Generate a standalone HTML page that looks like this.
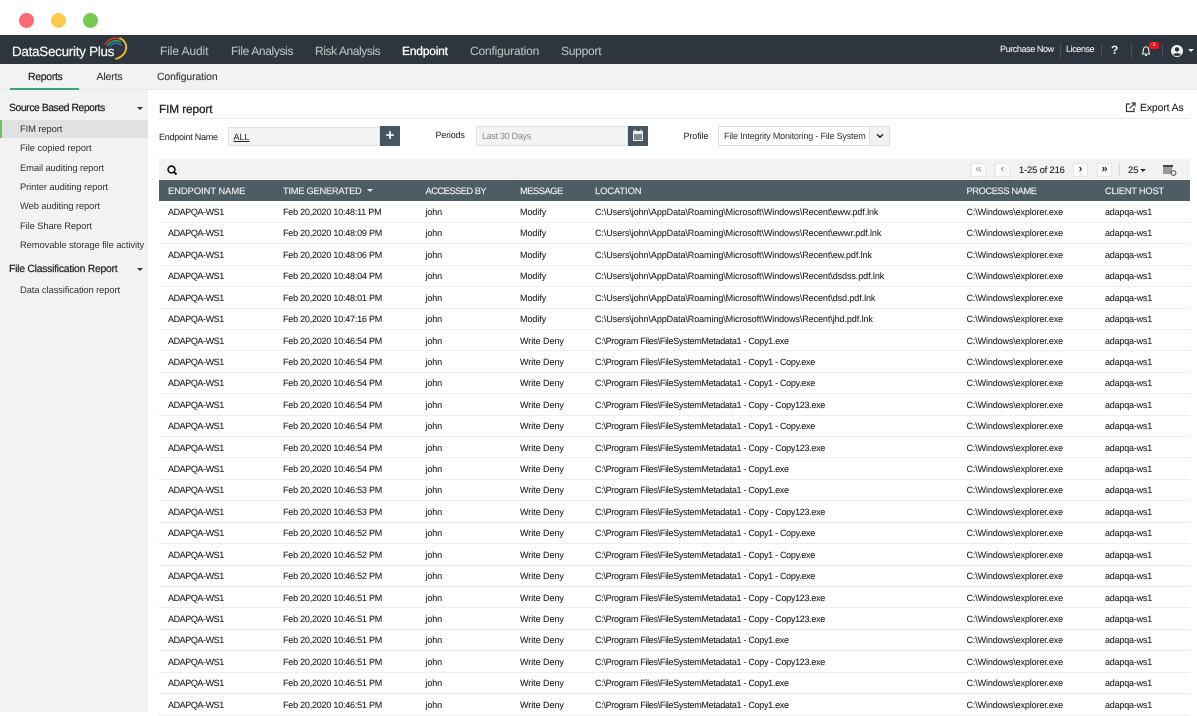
<!DOCTYPE html>
<html><head><meta charset="utf-8"><style>
*{box-sizing:border-box}
html,body{margin:0;padding:0;background:#fff}
body{width:1197px;height:712px;position:relative;overflow:hidden;font-family:"Liberation Sans",sans-serif;text-rendering:geometricPrecision;color:#222}
.a{position:absolute;white-space:nowrap}
.dot{position:absolute;width:15px;height:15px;border-radius:50%;top:13px}
.nav{position:absolute;top:44px;font-size:12px;line-height:14px;color:#b9bdc1;letter-spacing:-.1px;white-space:nowrap;-webkit-text-stroke:.1px #b9bdc1}
.sb{position:absolute;left:20px;font-size:9.4px;line-height:14px;color:#333;letter-spacing:-.1px;white-space:nowrap;margin-top:.4px}
.sh{position:absolute;left:9px;font-size:10.4px;line-height:14px;color:#222;white-space:nowrap;-webkit-text-stroke:.2px #222}
.caret{position:absolute;width:0;height:0;border-left:3px solid transparent;border-right:3px solid transparent;border-top:3.5px solid #333}
.sep{position:absolute;width:1px;background:#48505a;top:44px;height:14px}
.lb{position:absolute;font-size:9px;line-height:14px;color:#222;letter-spacing:-.1px;white-space:nowrap}
.pg{position:absolute;top:163px;height:14px;width:15px;background:#fff;border:1px solid #e6e6e6;font-size:11px;line-height:11px;text-align:center;color:#222}
#rows{position:absolute;left:159px;top:201.4px;width:1031px}
.r{position:relative;height:21.43px;border-bottom:1px solid #efefef;font-size:9px;line-height:21px;color:#222;letter-spacing:-.13px;-webkit-text-stroke:.08px #222}
.r span{position:absolute;top:.6px;white-space:nowrap}
.r span:nth-child(1){left:9px;letter-spacing:-.42px}
.r span:nth-child(2){left:124px;letter-spacing:-.22px}
.r span:nth-child(3){left:266.5px}
.r span:nth-child(4){left:361px;letter-spacing:-.05px}
.r span:nth-child(5){left:436px;letter-spacing:-.08px}
.r:nth-child(n+7) span:nth-child(5){letter-spacing:-.3px}
.r span:nth-child(6){left:807.5px}
.r span:nth-child(7){left:946px;letter-spacing:-.2px}
.h{position:absolute;top:184px;font-size:9.3px;line-height:14px;color:#e6eaec;letter-spacing:-.32px;white-space:nowrap;-webkit-text-stroke:.2px #e6eaec}
</style></head><body>
<div class="dot" style="left:19px;background:#fe6a70"></div>
<div class="dot" style="left:51px;background:#ffc94f"></div>
<div class="dot" style="left:83px;background:#77c94f"></div>

<div class="a" style="left:0;top:35px;width:1197px;height:29px;background:#2d353e"></div>
<div class="a" style="left:12px;top:44px;font-size:13.4px;line-height:16px;color:#f4f4f4;letter-spacing:-.25px;-webkit-text-stroke:.25px #f4f4f4">DataSecurity Plus</div>
<svg class="a" style="left:100px;top:36px" width="30" height="26" viewBox="0 0 30 26" fill="none">
<path d="M5 9C8 3 14 1 20 3" stroke="#d8352a" stroke-width="1.6"/>
<path d="M7.5 10C10 5 16 3.5 21 6" stroke="#2f9e4f" stroke-width="1.6"/>
<path d="M10 10.5C12 7 18 6 22 9.5" stroke="#2a6fc0" stroke-width="1.6"/>
<path d="M19.5 2C29 6 29 19 15.5 23" stroke="#f0c020" stroke-width="1.9"/>
</svg>
<div class="nav" style="left:160px">File Audit</div>
<div class="nav" style="left:231px;letter-spacing:-.35px">File Analysis</div>
<div class="nav" style="left:315px;letter-spacing:-.42px">Risk Analysis</div>
<div class="nav" style="left:402px;color:#fff;-webkit-text-stroke:.3px #fff;letter-spacing:-.2px">Endpoint</div>
<div class="nav" style="left:470px;letter-spacing:-.17px">Configuration</div>
<div class="nav" style="left:561px;letter-spacing:-.25px">Support</div>
<div class="a" style="left:1000px;top:42px;font-size:9px;line-height:14px;color:#eee;letter-spacing:-.4px;-webkit-text-stroke:.1px #eee">Purchase Now</div>
<div class="sep" style="left:1060px"></div>
<div class="a" style="left:1066px;top:42px;font-size:9px;line-height:14px;color:#eee;letter-spacing:-.4px;-webkit-text-stroke:.1px #eee">License</div>
<div class="sep" style="left:1101px"></div>
<div class="a" style="left:1111px;top:43px;font-size:12px;line-height:15px;color:#eee;font-weight:bold">?</div>
<div class="sep" style="left:1131px"></div>
<svg class="a" style="left:1140px;top:44px" width="12" height="14" viewBox="0 0 12 14" fill="none"><path d="M2.5 10C3.5 8.5 3 5 4 3.8C5 2.4 7 2.4 8 3.8C9 5 8.5 8.5 9.5 10Z" stroke="#eee" stroke-width="1.1"/><path d="M5 11.5H7" stroke="#eee" stroke-width="1.2"/></svg>
<div class="a" style="left:1149px;top:42px;width:10px;height:7px;background:#e8171f;border-radius:2px;font-size:5px;line-height:7px;color:#fff;text-align:center">2</div>
<div class="sep" style="left:1162px"></div>
<svg class="a" style="left:1170px;top:44px" width="14" height="14" viewBox="0 0 14 14"><circle cx="7" cy="7" r="6" fill="#eee"/><circle cx="7" cy="5.4" r="2.2" fill="#2d353e"/><path d="M3 11C3.5 8.6 10.5 8.6 11 11C9.5 12.2 4.5 12.2 3 11Z" fill="#2d353e"/></svg>
<div class="caret" style="left:1188px;top:49px;border-top-color:#eee"></div>

<div class="a" style="left:0;top:64px;width:1197px;height:26px;background:#f2f2f2;border-bottom:1px solid #e8e8e8"></div>
<div class="a" style="left:10px;top:88px;width:69px;height:2px;background:#3aa76d"></div>
<div class="a" style="left:28px;top:70.5px;font-size:10.4px;line-height:14px;color:#222;letter-spacing:-.25px;-webkit-text-stroke:.2px #222">Reports</div>
<div class="a" style="left:96.5px;top:70.5px;font-size:10.4px;line-height:14px;color:#333;letter-spacing:-.1px;-webkit-text-stroke:.1px #333">Alerts</div>
<div class="a" style="left:157px;top:70.5px;font-size:10.4px;line-height:14px;color:#333;letter-spacing:-.1px;-webkit-text-stroke:.1px #333">Configuration</div>

<div class="a" style="left:0;top:90px;width:148px;height:622px;background:#f2f2f2"></div>
<div class="a" style="left:0;top:120px;width:148px;height:18px;background:#e0e1e3"></div>
<div class="a" style="left:0;top:120px;width:2px;height:18px;background:#6fbf5a"></div>
<div class="sh" style="top:102px;letter-spacing:-.44px">Source Based Reports</div>
<div class="caret" style="left:137px;top:107px"></div>
<div class="sb" style="top:122px">FIM report</div>
<div class="sb" style="top:141px;letter-spacing:-.05px">File copied report</div>
<div class="sb" style="top:161px">Email auditing report</div>
<div class="sb" style="top:180px">Printer auditing report</div>
<div class="sb" style="top:199px">Web auditing report</div>
<div class="sb" style="top:219px">File Share Report</div>
<div class="sb" style="top:238px">Removable storage file activity</div>
<div class="sh" style="top:263px;letter-spacing:-.25px">File Classification Report</div>
<div class="caret" style="left:137px;top:268px"></div>
<div class="sb" style="top:283px">Data classification report</div>

<div class="a" style="left:159px;top:101.5px;font-size:11.8px;line-height:15px;color:#222;letter-spacing:-.1px;-webkit-text-stroke:.25px #222">FIM report</div>
<div class="a" style="left:159px;top:118px;width:1031px;height:1px;background:#ececec"></div>
<svg class="a" style="left:1125px;top:102px" width="11" height="11" viewBox="0 0 11 11" fill="none" stroke="#333" stroke-width="1.2"><path d="M5 2H1.5V9.5H9V6"/><path d="M4.5 6.5L9.5 1.5M6.5 1H10V4.5"/></svg>
<div class="a" style="left:1140px;top:101.5px;font-size:10.4px;line-height:14px;color:#222;letter-spacing:-.1px;-webkit-text-stroke:.1px #222">Export As</div>

<div class="lb" style="left:159px;top:129.5px;letter-spacing:-.25px">Endpoint Name</div>
<div class="a" style="left:228px;top:127px;width:152px;height:19px;background:#f3f3f3;border:1px solid #e2e2e2"></div>
<div class="a" style="left:233.5px;top:130px;font-size:9px;line-height:14px;text-decoration:underline;color:#222">ALL</div>
<div class="a" style="left:380px;top:126px;width:20px;height:20px;background:#46555f;color:#fff;font-size:15px;line-height:19px;text-align:center;font-weight:bold">+</div>
<div class="lb" style="left:435.5px;top:128px;letter-spacing:-.2px">Periods</div>
<div class="a" style="left:476px;top:126px;width:152px;height:20px;background:#f3f3f3;border:1px solid #e2e2e2"></div>
<div class="a" style="left:482px;top:129px;font-size:9px;line-height:14px;color:#888;letter-spacing:-.3px">Last 30 Days</div>
<div class="a" style="left:628px;top:126px;width:20px;height:20px;background:#46555f"></div>
<svg class="a" style="left:632px;top:129px" width="12" height="13" viewBox="0 0 12 13"><rect x="1" y="2" width="10" height="10" fill="#e8ecee"/><rect x="2" y="5" width="8" height="6" fill="#7d8a92"/><path d="M3 .5V3M9 .5V3" stroke="#e8ecee" stroke-width="1.2"/></svg>
<div class="lb" style="left:683.5px;top:129px">Profile</div>
<div class="a" style="left:718px;top:126px;width:172px;height:20px;background:#fff;border:1px solid #e0e0e0"></div>
<div class="a" style="left:869px;top:126px;width:21px;height:20px;background:#f2f2f2;border:1px solid #e0e0e0"></div>
<div class="a" style="left:724px;top:129px;font-size:9px;line-height:14px;color:#333;letter-spacing:-.18px">File Integrity Monitoring - File System</div>
<svg class="a" style="left:876px;top:133px" width="8" height="6" viewBox="0 0 8 6" fill="none"><path d="M1 1.2L4 4.2L7 1.2" stroke="#222" stroke-width="1.4"/></svg>

<div class="a" style="left:159px;top:159px;width:1031px;height:20px;background:#f2f2f2"></div>
<svg class="a" style="left:166px;top:164px" width="13" height="12" viewBox="0 0 13 12" fill="none" stroke="#111"><circle cx="5.5" cy="5.5" r="3.4" stroke-width="1.6"/><path d="M8 8L10.5 10.5" stroke-width="2"/></svg>
<div class="pg" style="left:971px;color:#888">«</div>
<div class="pg" style="left:995px;color:#666">‹</div>
<div class="a" style="left:1019px;top:163px;font-size:9.4px;line-height:14px;color:#222;letter-spacing:-.16px;-webkit-text-stroke:.1px #222">1-25 of 216</div>
<div class="pg" style="left:1073px;font-weight:bold">›</div>
<div class="pg" style="left:1097px;font-weight:bold">»</div>
<div class="a" style="left:1119px;top:163px;width:1px;height:13px;background:#d8d8d8"></div>
<div class="a" style="left:1128px;top:163px;font-size:9.4px;line-height:14px;color:#222;-webkit-text-stroke:.1px #222">25</div>
<div class="caret" style="left:1140px;top:169px"></div>
<svg class="a" style="left:1163px;top:164px" width="14" height="13" viewBox="0 0 14 13"><rect x="0" y="1" width="10" height="2.2" fill="#444"/><rect x="0" y="3.5" width="9" height="6.5" fill="#999"/><circle cx="10.5" cy="9" r="2.4" fill="#f2f2f2" stroke="#444"/></svg>

<div class="a" style="left:159px;top:180px;width:1031px;height:21px;background:#4d5c65"></div>
<div class="h" style="left:168px;letter-spacing:0">ENDPOINT NAME</div>
<div class="h" style="left:283px;letter-spacing:-.25px">TIME GENERATED</div>
<div class="caret" style="left:367px;top:189px;border-top-color:#e6eaec"></div>
<div class="h" style="left:425.5px;letter-spacing:-.5px">ACCESSED BY</div>
<div class="h" style="left:520px;letter-spacing:-.45px">MESSAGE</div>
<div class="h" style="left:595px;letter-spacing:-.05px">LOCATION</div>
<div class="h" style="left:966.5px;letter-spacing:-.4px">PROCESS NAME</div>
<div class="h" style="left:1105px;letter-spacing:-.22px">CLIENT HOST</div>

<div id="rows">
<div class="r"><span>ADAPQA-WS1</span><span>Feb 20,2020 10:48:11 PM</span><span>john</span><span>Modify</span><span>C:\Users\john\AppData\Roaming\Microsoft\Windows\Recent\eww.pdf.lnk</span><span>C:\Windows\explorer.exe</span><span>adapqa-ws1</span></div>
<div class="r"><span>ADAPQA-WS1</span><span>Feb 20,2020 10:48:09 PM</span><span>john</span><span>Modify</span><span>C:\Users\john\AppData\Roaming\Microsoft\Windows\Recent\ewwr.pdf.lnk</span><span>C:\Windows\explorer.exe</span><span>adapqa-ws1</span></div>
<div class="r"><span>ADAPQA-WS1</span><span>Feb 20,2020 10:48:06 PM</span><span>john</span><span>Modify</span><span>C:\Users\john\AppData\Roaming\Microsoft\Windows\Recent\ew.pdf.lnk</span><span>C:\Windows\explorer.exe</span><span>adapqa-ws1</span></div>
<div class="r"><span>ADAPQA-WS1</span><span>Feb 20,2020 10:48:04 PM</span><span>john</span><span>Modify</span><span>C:\Users\john\AppData\Roaming\Microsoft\Windows\Recent\dsdss.pdf.lnk</span><span>C:\Windows\explorer.exe</span><span>adapqa-ws1</span></div>
<div class="r"><span>ADAPQA-WS1</span><span>Feb 20,2020 10:48:01 PM</span><span>john</span><span>Modify</span><span>C:\Users\john\AppData\Roaming\Microsoft\Windows\Recent\dsd.pdf.lnk</span><span>C:\Windows\explorer.exe</span><span>adapqa-ws1</span></div>
<div class="r"><span>ADAPQA-WS1</span><span>Feb 20,2020 10:47:16 PM</span><span>john</span><span>Modify</span><span>C:\Users\john\AppData\Roaming\Microsoft\Windows\Recent\jhd.pdf.lnk</span><span>C:\Windows\explorer.exe</span><span>adapqa-ws1</span></div>
<div class="r"><span>ADAPQA-WS1</span><span>Feb 20,2020 10:46:54 PM</span><span>john</span><span>Write Deny</span><span>C:\Program Files\FileSystemMetadata1 - Copy1.exe</span><span>C:\Windows\explorer.exe</span><span>adapqa-ws1</span></div>
<div class="r"><span>ADAPQA-WS1</span><span>Feb 20,2020 10:46:54 PM</span><span>john</span><span>Write Deny</span><span>C:\Program Files\FileSystemMetadata1 - Copy1 - Copy.exe</span><span>C:\Windows\explorer.exe</span><span>adapqa-ws1</span></div>
<div class="r"><span>ADAPQA-WS1</span><span>Feb 20,2020 10:46:54 PM</span><span>john</span><span>Write Deny</span><span>C:\Program Files\FileSystemMetadata1 - Copy1 - Copy.exe</span><span>C:\Windows\explorer.exe</span><span>adapqa-ws1</span></div>
<div class="r"><span>ADAPQA-WS1</span><span>Feb 20,2020 10:46:54 PM</span><span>john</span><span>Write Deny</span><span>C:\Program Files\FileSystemMetadata1 - Copy - Copy123.exe</span><span>C:\Windows\explorer.exe</span><span>adapqa-ws1</span></div>
<div class="r"><span>ADAPQA-WS1</span><span>Feb 20,2020 10:46:54 PM</span><span>john</span><span>Write Deny</span><span>C:\Program Files\FileSystemMetadata1 - Copy1 - Copy.exe</span><span>C:\Windows\explorer.exe</span><span>adapqa-ws1</span></div>
<div class="r"><span>ADAPQA-WS1</span><span>Feb 20,2020 10:46:54 PM</span><span>john</span><span>Write Deny</span><span>C:\Program Files\FileSystemMetadata1 - Copy - Copy123.exe</span><span>C:\Windows\explorer.exe</span><span>adapqa-ws1</span></div>
<div class="r"><span>ADAPQA-WS1</span><span>Feb 20,2020 10:46:54 PM</span><span>john</span><span>Write Deny</span><span>C:\Program Files\FileSystemMetadata1 - Copy1.exe</span><span>C:\Windows\explorer.exe</span><span>adapqa-ws1</span></div>
<div class="r"><span>ADAPQA-WS1</span><span>Feb 20,2020 10:46:53 PM</span><span>john</span><span>Write Deny</span><span>C:\Program Files\FileSystemMetadata1 - Copy1.exe</span><span>C:\Windows\explorer.exe</span><span>adapqa-ws1</span></div>
<div class="r"><span>ADAPQA-WS1</span><span>Feb 20,2020 10:46:53 PM</span><span>john</span><span>Write Deny</span><span>C:\Program Files\FileSystemMetadata1 - Copy - Copy123.exe</span><span>C:\Windows\explorer.exe</span><span>adapqa-ws1</span></div>
<div class="r"><span>ADAPQA-WS1</span><span>Feb 20,2020 10:46:52 PM</span><span>john</span><span>Write Deny</span><span>C:\Program Files\FileSystemMetadata1 - Copy1 - Copy.exe</span><span>C:\Windows\explorer.exe</span><span>adapqa-ws1</span></div>
<div class="r"><span>ADAPQA-WS1</span><span>Feb 20,2020 10:46:52 PM</span><span>john</span><span>Write Deny</span><span>C:\Program Files\FileSystemMetadata1 - Copy1 - Copy.exe</span><span>C:\Windows\explorer.exe</span><span>adapqa-ws1</span></div>
<div class="r"><span>ADAPQA-WS1</span><span>Feb 20,2020 10:46:52 PM</span><span>john</span><span>Write Deny</span><span>C:\Program Files\FileSystemMetadata1 - Copy1 - Copy.exe</span><span>C:\Windows\explorer.exe</span><span>adapqa-ws1</span></div>
<div class="r"><span>ADAPQA-WS1</span><span>Feb 20,2020 10:46:51 PM</span><span>john</span><span>Write Deny</span><span>C:\Program Files\FileSystemMetadata1 - Copy - Copy123.exe</span><span>C:\Windows\explorer.exe</span><span>adapqa-ws1</span></div>
<div class="r"><span>ADAPQA-WS1</span><span>Feb 20,2020 10:46:51 PM</span><span>john</span><span>Write Deny</span><span>C:\Program Files\FileSystemMetadata1 - Copy - Copy123.exe</span><span>C:\Windows\explorer.exe</span><span>adapqa-ws1</span></div>
<div class="r"><span>ADAPQA-WS1</span><span>Feb 20,2020 10:46:51 PM</span><span>john</span><span>Write Deny</span><span>C:\Program Files\FileSystemMetadata1 - Copy1.exe</span><span>C:\Windows\explorer.exe</span><span>adapqa-ws1</span></div>
<div class="r"><span>ADAPQA-WS1</span><span>Feb 20,2020 10:46:51 PM</span><span>john</span><span>Write Deny</span><span>C:\Program Files\FileSystemMetadata1 - Copy - Copy123.exe</span><span>C:\Windows\explorer.exe</span><span>adapqa-ws1</span></div>
<div class="r"><span>ADAPQA-WS1</span><span>Feb 20,2020 10:46:51 PM</span><span>john</span><span>Write Deny</span><span>C:\Program Files\FileSystemMetadata1 - Copy1.exe</span><span>C:\Windows\explorer.exe</span><span>adapqa-ws1</span></div>
<div class="r"><span>ADAPQA-WS1</span><span>Feb 20,2020 10:46:51 PM</span><span>john</span><span>Write Deny</span><span>C:\Program Files\FileSystemMetadata1 - Copy1.exe</span><span>C:\Windows\explorer.exe</span><span>adapqa-ws1</span></div>
</div>
</body></html>
